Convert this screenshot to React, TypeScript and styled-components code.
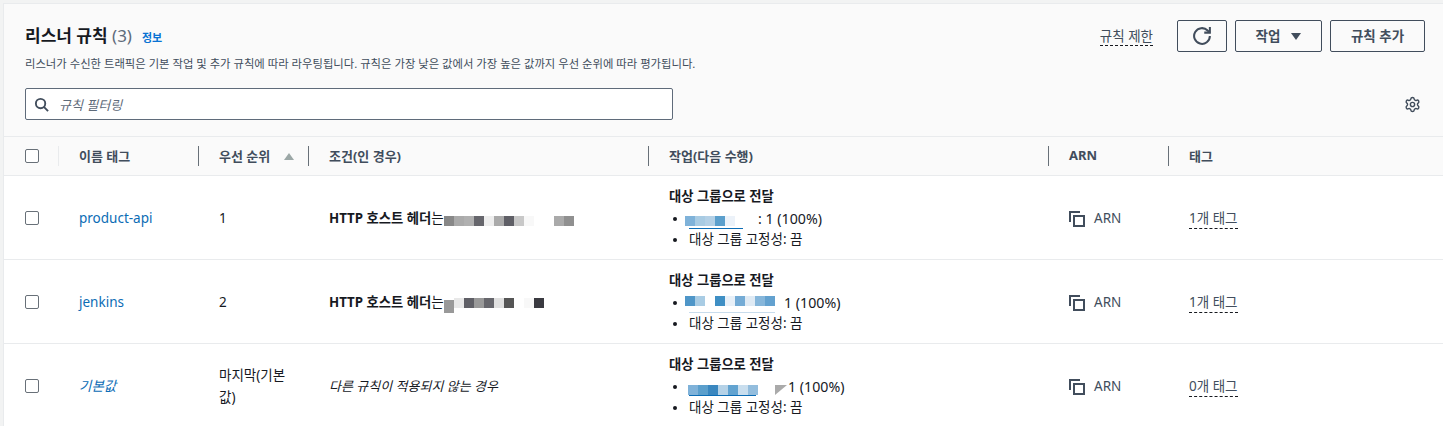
import React, { FC } from 'react';
import styled, { createGlobalStyle } from 'styled-components';
import { Settings } from 'lucide-react';

const GlobalStyle = createGlobalStyle`
    html, body {
        margin: 0;
        height: 426px;
        overflow: hidden;
        background: #f2f3f3;
    }
    body {
        font-family: "Noto Sans", "Noto Sans CJK KR", sans-serif;
        color: #16191f;
    }
`

const COLUMNS = '54px 140px 110px 340px 400px 120px 1fr';

const Page = styled.div`
    padding: 3px 0 0 3px;
`

const Panel = styled.main`
    background: #fff;
    border: 1px solid #e9ebed;
    border-width: 1px 0 0 1px;
    height: 423px;
    overflow: hidden;
`

const Header = styled.header`
    background: #fafafa;
    height: 133px;
    box-sizing: border-box;
    padding: 16px 18px 0 21px;
    border-bottom: 1px solid #e9ebed;
`

const TopRow = styled.div`
    display: flex;
    justify-content: space-between;
    align-items: flex-start;
    height: 68px;
`

const TitleLine = styled.div`
    display: flex;
    align-items: baseline;
    gap: 10px;
    height: 30px;
    line-height: 30px;
    padding-top: 1px;
`

const Title = styled.h1`
    margin: 0;
    font-size: 17px;
    font-weight: 700;
    color: #16191f;
`

const Count = styled.span`
    font-weight: 400;
    color: #5f6b7a;
`

const InfoLink = styled.a`
    font-size: 11px;
    font-weight: 700;
    color: #0972d3;
`

const Description = styled.p`
    margin: 5px 0 0;
    font-size: 11.35px;
    line-height: 16px;
    color: #414d5c;
`

const Actions = styled.div`
    display: flex;
    align-items: center;
    gap: 8px;
`

const LimitLink = styled.span`
    font-size: 13.5px;
    line-height: 18px;
    color: #414d5c;
    border-bottom: 1px dashed #16191f;
    margin-right: 16px;
`

const Button = styled.button<{ $width: number; $icon?: boolean }>`
    display: flex;
    align-items: center;
    justify-content: center;
    gap: 11px;
    width: ${p => p.$width}px;
    height: 32px;
    padding: 0 0 ${p => (p.$icon ? 0 : 2)}px;
    background: transparent;
    border: 1px solid #414d5c;
    border-radius: 2px;
    color: #414d5c;
    font: 700 13.5px "Noto Sans", "Noto Sans CJK KR", sans-serif;
`

const Caret = styled.span`
    width: 0;
    height: 0;
    margin-top: 2px;
    border-left: 5px solid transparent;
    border-right: 5px solid transparent;
    border-top: 7px solid #414d5c;
`

const FilterRow = styled.div`
    display: flex;
    justify-content: space-between;
    align-items: center;
    padding-right: 4px;
`

const SearchBox = styled.div`
    display: flex;
    align-items: center;
    gap: 10px;
    width: 648px;
    height: 32px;
    box-sizing: border-box;
    padding-left: 8px;
    background: #fff;
    border: 1px solid #5f6b7a;
    border-radius: 2px;
`

const Placeholder = styled.span`
    font-size: 13px;
    font-style: italic;
    color: #5f6b7a;
`

const Row = styled.div`
    display: grid;
    grid-template-columns: ${COLUMNS};
    height: 84px;
    align-items: center;
    border-bottom: 1px solid #e9ebed;
    box-sizing: border-box;
`

const HeadRow = styled(Row)`
    height: 39px;
    background: #fafafa;
`

const HeadCell = styled.div<{ $faint?: boolean }>`
    display: flex;
    align-items: center;
    gap: 14px;
    height: 20px;
    box-sizing: border-box;
    padding: 0 0 2px 20px;
    font-size: 13px;
    font-weight: 700;
    color: #414d5c;
    border-left: 1px solid ${p => (p.$faint ? '#e9ebed' : '#687078')};
`

const SortIcon = styled.span`
    width: 0;
    height: 0;
    margin-top: 2px;
    border-left: 5px solid transparent;
    border-right: 5px solid transparent;
    border-bottom: 7px solid #9ba7a6;
`

const CheckCell = styled.div`
    padding-left: 21px;
    display: flex;
    align-items: center;
`

const Checkbox = styled.span`
    display: block;
    width: 14px;
    height: 14px;
    box-sizing: border-box;
    background: #fff;
    border: 1px solid #687078;
    border-radius: 2px;
`

const Cell = styled.div`
    padding: 2px 20px 0 21px;
    font-size: 13.5px;
    line-height: 21px;
    color: #16191f;
`

const GroupCell = styled(Cell)`
    padding-top: 1px;
`

const WrappedCell = styled(Cell)`
    padding-top: 0;
    line-height: 22px;
`

const NameLink = styled.a<{ $italic?: boolean }>`
    color: #0b6cb5;
    font-style: ${p => (p.$italic ? 'italic' : 'normal')};
`

const Bold = styled.strong`
    font-size: 13.3px;
    font-weight: 700;
`

const GroupTitle = styled(Bold)`
    display: block;
    margin-bottom: 1px;
`

const Italic = styled.span`
    font-size: 13px;
    font-style: italic;
`

const HostLine = styled.div`
    display: flex;
    align-items: center;
    white-space: nowrap;
`

const Mosaic = styled.span<{ $dy: number }>`
    display: inline-flex;
    align-items: flex-start;
    height: 10px;
    transform: translateY(${p => p.$dy}px);
`

const Tile = styled.i<{ $color: string; $tall?: boolean }>`
    display: block;
    flex: none;
    width: 10px;
    height: ${p => (p.$tall ? 13 : 10)}px;
    margin-top: ${p => (p.$tall ? 2 : 0)}px;
    background: ${p => p.$color};
`

const BulletList = styled.ul`
    margin: 0;
    padding: 0;
    list-style: none;
`

const Bullet = styled.li`
    display: flex;
    align-items: center;
    height: 21px;
    padding-left: 4px;
    white-space: pre;
    &::before {
        content: '';
        width: 4px;
        height: 4px;
        margin-right: 12px;
        border-radius: 50%;
        background: #16191f;
        flex: none;
    }
`

const Share = styled.span`
    font-size: 14.2px;
`

const TargetLink = styled.span<{ $lineWidth: number; $lineTop: number; $lineColor: string; $gap: number; $shift: number; $dy: number }>`
    position: relative;
    display: inline-flex;
    margin: 0 ${p => p.$gap}px 0 ${p => p.$shift}px;
    transform: translateY(${p => p.$dy}px);
    &::after {
        content: '';
        position: absolute;
        left: ${p => -p.$shift}px;
        top: ${p => p.$lineTop}px;
        width: ${p => p.$lineWidth}px;
        height: 1px;
        background: ${p => p.$lineColor};
    }
`

const Wedge = styled.span`
    width: 0;
    height: 0;
    margin-right: 1px;
    transform: translateY(3px);
    border-top: 10px solid #aaa;
    border-right: 12px solid transparent;
`

const ArnCell = styled(Cell)`
    display: flex;
    align-items: center;
    gap: 9px;
    color: #414d5c;
`

const TagText = styled.span`
    color: #414d5c;
    padding-bottom: 1px;
    border-bottom: 1px dashed #16191f;
`

const SearchIcon: FC = () => (
    <svg width="15" height="15" viewBox="0 0 16 16" fill="none" stroke="#414d5c" strokeWidth="2">
        <circle cx="7" cy="7" r="5" />
        <path d="m15 15-4.5-4.5" />
    </svg>
)

const RefreshIcon: FC = () => (
    <svg width="18" height="18" viewBox="0 0 16 16" fill="none" stroke="#414d5c" strokeWidth="1.8">
        <path d="M10 5h5V0" />
        <path d="M15 8a7 7 0 1 1-2-4.9L15 5" />
    </svg>
)

const CopyIcon: FC = () => (
    <svg width="16" height="16" viewBox="0 0 16 16" fill="none" stroke="#414d5c" strokeWidth="2">
        <path d="M1 11V1h10" />
        <rect x="5" y="5" width="10" height="10" />
    </svg>
)

const tiles = (colors: string[], dy: number, tallFirst?: boolean) => (
    <Mosaic $dy={dy}>
        {colors.map((c, i) => <Tile key={i} $color={c} $tall={tallFirst && i === 0} />)}
    </Mosaic>
)

const rules = [
    {
        name: 'product-api',
        priority: '1',
        hosts: ['#888', '#aaa', '#b0b0b0', '#66666c', '#eee', '#aaa', '#5f5f66', '#c8c8c8', '#f8f8f8', '#fff', '#fff', '#aaa', '#909090'],
        hostDy: 2,
        target: ['#7fb2d9', '#a8cbe3', '#b3d0e6', '#5b9fcc', '#ecf2f9'],
        targetDy: 2,
        lineWidth: 54,
        lineTop: 12,
        lineColor: '#0b6cb5',
        gap: 23,
        share: ': 1 (100%)',
        tags: '1개 태그',
    },
    {
        name: 'jenkins',
        priority: '2',
        hosts: ['#999', '#e8e8e8', '#5f5f66', '#999', '#66666c', '#e0e0e0', '#555', '#fff', '#f8f8f8', '#3a3a40'],
        hostDy: 0,
        target: ['#4f96c8', '#a9cce4', '#fff', '#3f8fc4', '#e8f0f8', '#74abd5', '#dfeaf4', '#86b6da', '#63a1cf'],
        targetDy: -2,
        lineWidth: 86,
        lineTop: 16,
        lineColor: '#c8dcec',
        gap: 9,
        share: '1 (100%)',
        tags: '1개 태그',
    },
]

const App: FC = () => (
    <Page>
        <GlobalStyle />
        <Panel>
            <Header>
                <TopRow>
                    <div>
                        <TitleLine>
                            <Title>리스너 규칙 <Count>(3)</Count></Title>
                            <InfoLink>정보</InfoLink>
                        </TitleLine>
                        <Description>리스너가 수신한 트래픽은 기본 작업 및 추가 규칙에 따라 라우팅됩니다. 규칙은 가장 낮은 값에서 가장 높은 값까지 우선 순위에 따라 평가됩니다.</Description>
                    </div>
                    <Actions>
                        <LimitLink>규칙 제한</LimitLink>
                        <Button $width={50} $icon><RefreshIcon /></Button>
                        <Button $width={87}>작업 <Caret /></Button>
                        <Button $width={95}>규칙 추가</Button>
                    </Actions>
                </TopRow>
                <FilterRow>
                    <SearchBox>
                        <SearchIcon />
                        <Placeholder>규칙 필터링</Placeholder>
                    </SearchBox>
                    <Settings size={17} color="#414d5c" strokeWidth={2} />
                </FilterRow>
            </Header>

            <HeadRow>
                <CheckCell><Checkbox /></CheckCell>
                <HeadCell $faint>이름 태그</HeadCell>
                <HeadCell>우선 순위 <SortIcon /></HeadCell>
                <HeadCell>조건(인 경우)</HeadCell>
                <HeadCell>작업(다음 수행)</HeadCell>
                <HeadCell>ARN</HeadCell>
                <HeadCell>태그</HeadCell>
            </HeadRow>

            {rules.map((rule, i) => (
                <Row key={rule.name}>
                    <CheckCell><Checkbox /></CheckCell>
                    <Cell><NameLink>{rule.name}</NameLink></Cell>
                    <Cell>{rule.priority}</Cell>
                    <Cell>
                        <HostLine>
                            <Bold>HTTP 호스트 헤더</Bold>는{tiles(rule.hosts, rule.hostDy, i === 1)}
                        </HostLine>
                    </Cell>
                    <GroupCell>
                        <GroupTitle>대상 그룹으로 전달</GroupTitle>
                        <BulletList>
                            <Bullet>
                                <TargetLink
                                    $lineWidth={rule.lineWidth}
                                    $lineTop={rule.lineTop}
                                    $lineColor={rule.lineColor}
                                    $shift={-4}
                                    $gap={rule.gap}
                                    $dy={rule.targetDy}
                                >
                                    {tiles(rule.target, 0)}
                                </TargetLink>
                                <Share>{rule.share}</Share>
                            </Bullet>
                            <Bullet>대상 그룹 고정성: 끔</Bullet>
                        </BulletList>
                    </GroupCell>
                    <ArnCell><CopyIcon />ARN</ArnCell>
                    <Cell><TagText>{rule.tags}</TagText></Cell>
                </Row>
            ))}

            <Row>
                <CheckCell><Checkbox /></CheckCell>
                <Cell><NameLink $italic>기본값</NameLink></Cell>
                <WrappedCell>마지막(기본값)</WrappedCell>
                <Cell><Italic>다른 규칙이 적용되지 않는 경우</Italic></Cell>
                <GroupCell>
                    <GroupTitle>대상 그룹으로 전달</GroupTitle>
                    <BulletList>
                        <Bullet>
                            <TargetLink $lineWidth={67} $lineTop={10} $lineColor="#0b6cb5" $shift={-1} $gap={17} $dy={3}>
                                {tiles(['#7fb2d9', '#5b9fcc', '#3a87bf', '#b5d2e7', '#62a3d0', '#c9deee', '#93bddd'], 0)}
                            </TargetLink>
                            <Wedge />
                            <Share>1 (100%)</Share>
                        </Bullet>
                        <Bullet>대상 그룹 고정성: 끔</Bullet>
                    </BulletList>
                </GroupCell>
                <ArnCell><CopyIcon />ARN</ArnCell>
                <Cell><TagText>0개 태그</TagText></Cell>
            </Row>
        </Panel>
    </Page>
)

export default App
